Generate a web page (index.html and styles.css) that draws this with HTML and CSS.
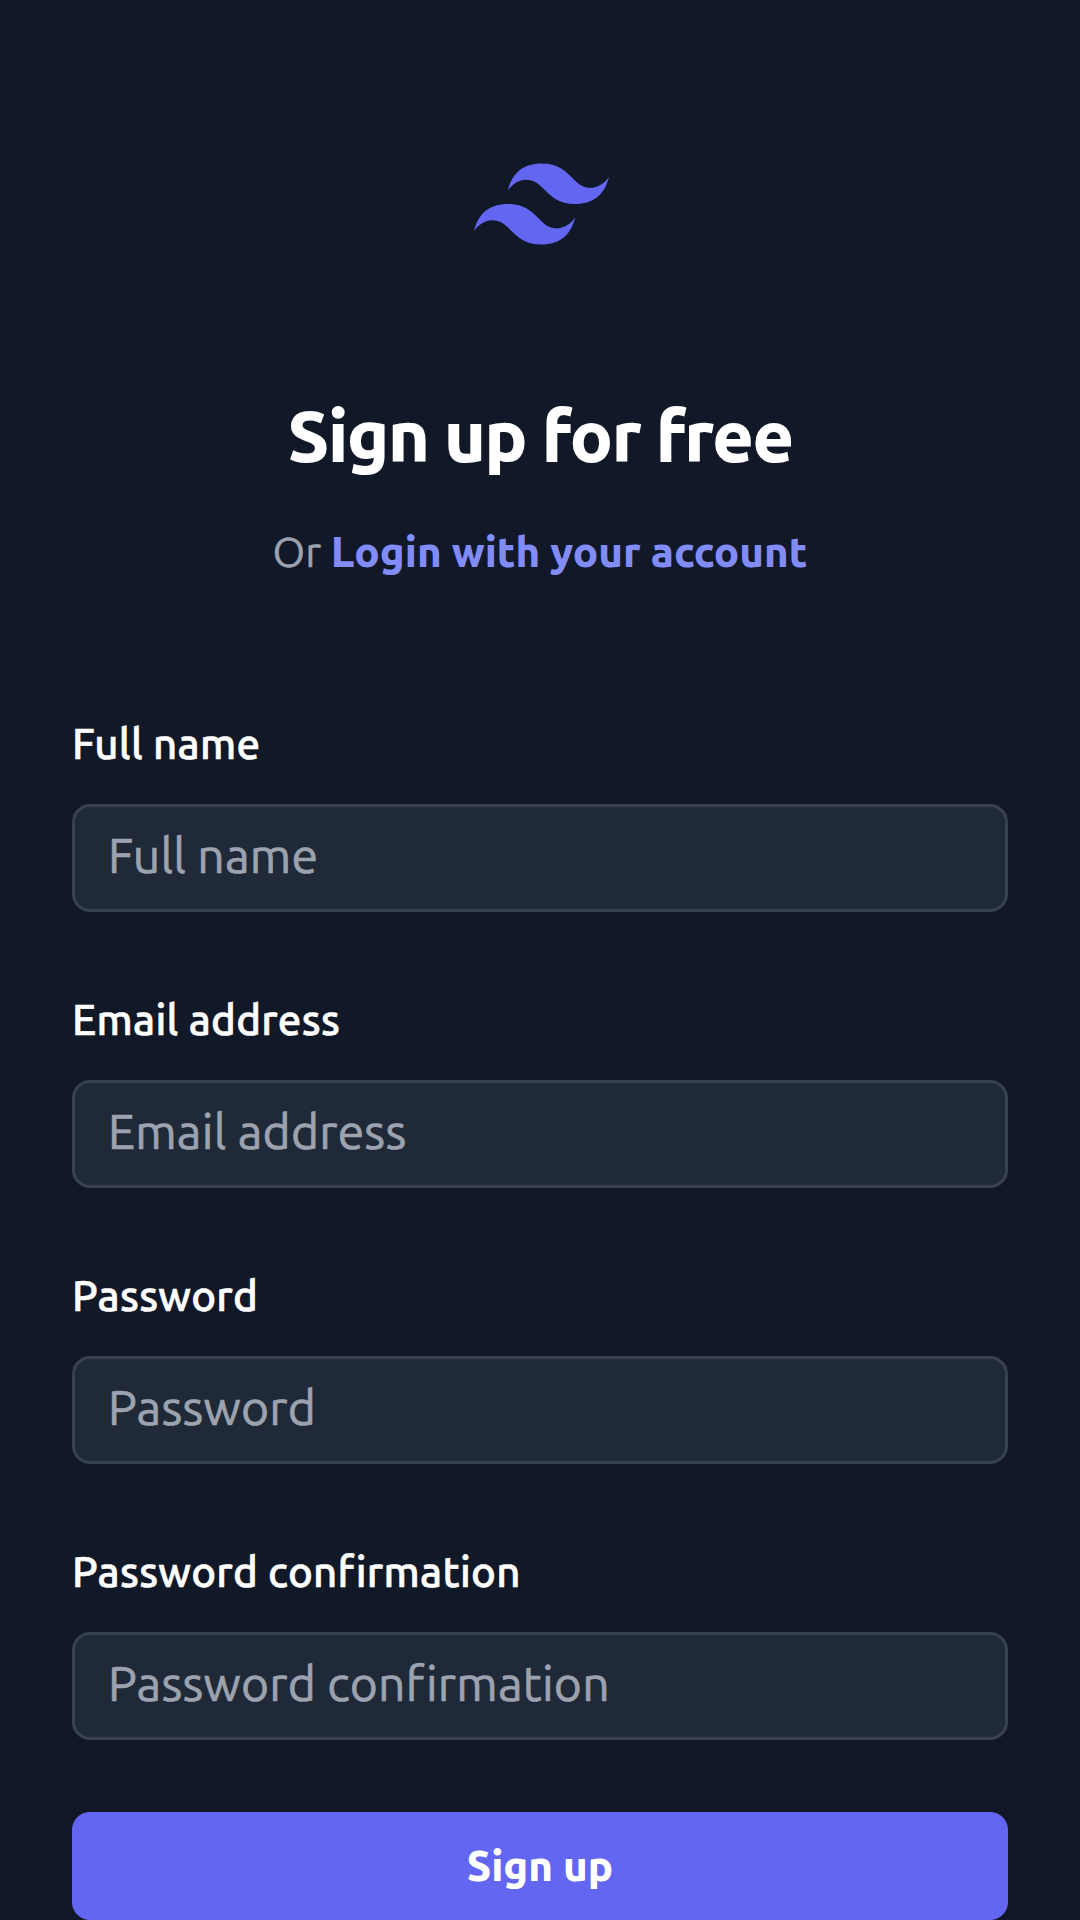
FILE: index.html
```html
<!DOCTYPE html>
<html lang="en">
<head>
  <meta charset="utf-8">
  <meta name="viewport" content="width=device-width, initial-scale=1">
  <title>Sign up</title>
  <link rel="stylesheet" href="styles.css">
</head>
<body>
  <main class="page">
    <svg class="logo" viewBox="0 0 54 32.4" fill="currentColor" aria-hidden="true">
      <path d="M27 0c-7.2 0-11.7 3.6-13.5 10.8 2.7-3.6 5.85-4.95 9.45-4.05 2.054.513 3.522 2.004 5.147 3.653C30.744 13.09 33.808 16.2 40.5 16.2c7.2 0 11.7-3.6 13.5-10.8-2.7 3.6-5.85 4.95-9.45 4.05-2.054-.513-3.522-2.004-5.147-3.653C36.756 3.11 33.692 0 27 0zM13.5 16.2C6.3 16.2 1.8 19.8 0 27c2.7-3.6 5.85-4.95 9.45-4.05 2.054.514 3.522 2.004 5.147 3.653C17.244 29.29 20.308 32.4 27 32.4c7.2 0 11.7-3.6 13.5-10.8-2.7 3.6-5.85 4.95-9.45 4.05-2.054-.513-3.522-2.004-5.147-3.653C23.256 19.31 20.192 16.2 13.5 16.2z"/>
    </svg>
    <h1 class="title">Sign up for free</h1>
    <p class="subtitle">Or <a class="login-link" href="#">Login with your account</a></p>
    <form class="form">
      <div class="field">
        <label class="label" for="name">Full name</label>
        <input class="input" id="name" type="text" placeholder="Full name">
      </div>
      <div class="field">
        <label class="label" for="email">Email address</label>
        <input class="input" id="email" type="email" placeholder="Email address">
      </div>
      <div class="field">
        <label class="label" for="password">Password</label>
        <input class="input" id="password" type="password" placeholder="Password">
      </div>
      <div class="field">
        <label class="label" for="confirmation">Password confirmation</label>
        <input class="input" id="confirmation" type="password" placeholder="Password confirmation">
      </div>
      <button class="submit" type="button">Sign up</button>
    </form>
  </main>
</body>
</html>
```
FILE: styles.css
```css
*,
*::before,
*::after {
  box-sizing: border-box;
}

html {
  background: #111827;
}

body {
  margin: 0;
  color: #fff;
  font-family: Ubuntu, "Noto Sans", sans-serif;
  font-size: 42px;
  line-height: 60px;
}

.page {
  display: flex;
  flex-direction: column;
  align-items: center;
  height: 1920px;
  padding: 163px 72px 0;
  overflow: hidden;
}

.logo {
  display: block;
  flex: none;
  width: 135px;
  height: 82px;
  margin-left: 2px;
  color: #6366f1;
}

.title {
  margin: 143px 0 0;
  font-size: 72px;
  font-weight: 800;
  line-height: 96px;
  letter-spacing: -1.8px;
}

.subtitle {
  margin: 38px 0 0;
  color: #9ca3af;
  -webkit-text-stroke: 0.5px;
}

.login-link {
  color: #818cf8;
  font-weight: 800;
  text-decoration: none;
  -webkit-text-stroke: 0;
}

.form {
  width: 100%;
  margin-top: 132px;
}

.field {
  display: flex;
  flex-direction: column;
  gap: 30px;
  margin-bottom: 78px;
}

.field:last-of-type {
  margin-bottom: 72px;
}

.label {
  font-weight: 500;
  letter-spacing: 0.28px;
  -webkit-text-stroke: 0.6px;
}

.input {
  width: 100%;
  height: 108px;
  padding: 12px 33px 18px;
  border: 3px solid #374151;
  border-radius: 18px;
  background: #1f2937;
  box-shadow: 0 3px 6px rgb(0 0 0 / 5%);
  color: #fff;
  font: inherit;
  font-size: 48px;
  line-height: 72px;
  letter-spacing: 0.24px;
}

.input::placeholder {
  color: #9ca3af;
  opacity: 1;
  -webkit-text-stroke: 0.7px;
}

.submit {
  display: block;
  width: 100%;
  height: 108px;
  padding: 0;
  border: 0;
  border-radius: 18px;
  background: #6366f1;
  box-shadow: 0 3px 6px rgb(0 0 0 / 5%);
  color: #fff;
  font: inherit;
  font-weight: 800;
}
```
